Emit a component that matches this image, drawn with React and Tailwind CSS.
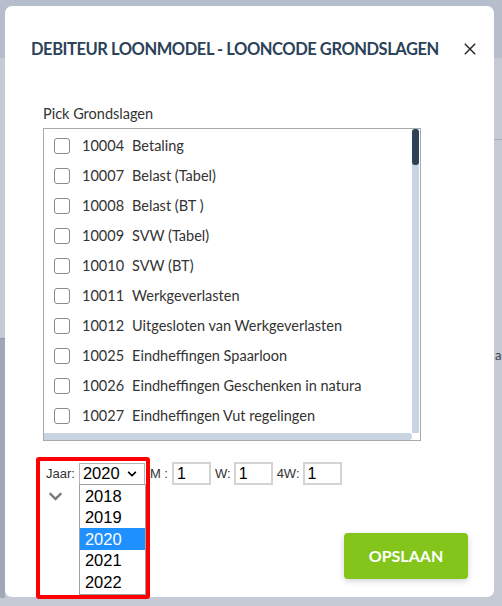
import React from 'react';

const ROWS = [
  ['10004', 'Betaling'],
  ['10007', 'Belast (Tabel)'],
  ['10008', 'Belast (BT )'],
  ['10009', 'SVW (Tabel)'],
  ['10010', 'SVW (BT)'],
  ['10011', 'Werkgeverlasten'],
  ['10012', 'Uitgesloten van Werkgeverlasten'],
  ['10025', 'Eindheffingen Spaarloon'],
  ['10026', 'Eindheffingen Geschenken in natura'],
  ['10027', 'Eindheffingen Vut regelingen'],
];

const YEARS = ['2018', '2019', '2020', '2021', '2022'];

const sans = { fontFamily: 'Lato, "Noto Sans", sans-serif' };

function Chevron({ className }) {
  return (
    <svg viewBox="0 0 448 512" className={className} fill="currentColor">
      <path d="M207 381.5L12.7 187.1c-9.4-9.4-9.4-24.6 0-33.9l22.7-22.7c9.4-9.4 24.5-9.4 33.9 0L224 284.5l154.7-154c9.4-9.3 24.5-9.3 33.9 0l22.7 22.7c9.4 9.4 9.4 24.6 0 33.9L241 381.5c-9.4 9.4-24.6 9.4-34 0z" />
    </svg>
  );
}

function NumInput({ value }) {
  return (
    <div className="w-[39px] h-[23px] border-2 border-[#d4d4d4] bg-white flex items-center pl-[3px] text-[16px] text-black leading-none">
      {value}
    </div>
  );
}

export default function App() {
  return (
    <div className="relative w-[502px] h-[606px] overflow-hidden bg-[#c6cad5]">
      {/* page behind the overlay */}
      <div className="absolute left-0 top-0 w-full h-[58px] bg-[#b6bdcb]" />
      <div className="absolute right-0 top-[139px] w-[10px] h-px bg-[#a8aebb]" />
      <div className="absolute left-0 top-[338px] w-[5px] h-[260px] bg-[#a0a8b8] border-t border-[#8f97a8]" />
      <span className="absolute left-[495px] top-[346px] text-[13px] text-[#3a3f48]" style={sans}>as</span>

      {/* modal */}
      <div
        className="absolute left-[5px] top-[6px] w-[489px] h-[591px] rounded-[7px] bg-white flex flex-col pl-[26px] pr-[18px] pt-[32px] pb-[18px]"
        style={sans}
      >
        <div className="flex items-center justify-between h-[22px]">
          <h2 className="text-[16.5px] font-bold tracking-[-0.45px] text-[#2b4259] leading-none whitespace-nowrap">
            DEBITEUR LOONMODEL - LOONCODE GRONDSLAGEN
          </h2>
          <svg viewBox="0 0 12 12" className="w-[12px] h-[12px] text-[#222]" fill="none" stroke="currentColor" strokeWidth="1.4">
            <path d="M0.8 0.8L11.2 11.2M11.2 0.8L0.8 11.2" />
          </svg>
        </div>

        <div className="mt-[44px] pl-[12px] text-[14.5px] leading-[20px] text-[#333]">Pick Grondslagen</div>

        <div className="mt-[4px] ml-[12px] w-[378px] h-[313px] border border-[#a9a9a9] flex flex-col overflow-hidden">
          <div className="flex flex-1 min-h-0">
            <div className="flex-1 pt-[2px] overflow-hidden">
              {ROWS.map(([code, name]) => (
                <div key={code} className="h-[30px] flex items-center pl-[10px] text-[14.5px] text-[#333] whitespace-nowrap">
                  <span className="w-[16px] h-[16px] rounded-[3px] border border-[#8a8a8a] bg-white shrink-0" />
                  <span className="ml-[12px]">{code}</span>
                  <span className="ml-[8px]">{name}</span>
                </div>
              ))}
            </div>
            <div className="w-[7px] mr-px bg-[#c8d4e1] rounded-t-[3px] flex flex-col">
              <div className="h-[36px] rounded-[3px] bg-[#2c4259]" />
            </div>
          </div>
          <div className="h-[7px] flex">
            <div className="flex-1 bg-[#c8d4e1] rounded-r-[3px]" />
            <div className="w-[8px]" />
          </div>
        </div>

        {/* Jaar / M / W / 4W */}
        <div className="mt-[21px] ml-[15px] flex items-center h-[23px] text-[13px] text-[#333]" style={{ fontFamily: '"Liberation Sans", Arial, sans-serif' }}>
          <span>Jaar:</span>
          <div className="relative ml-[4px]">
            <div className="w-[66px] h-[22px] border border-[#b5b5b5] bg-white flex items-center pl-[3px] pr-[7px] justify-between text-[16.5px] text-black leading-none">
              <span>2020</span>
              <Chevron className="w-[10px] h-[10px] text-black" />
            </div>
            <div className="absolute left-0 top-[21px] w-[67px] h-[111px] border border-[#a0a0a0] bg-white flex flex-col py-[1px] z-10">
              {YEARS.map((y) => (
                <div
                  key={y}
                  className={`h-[21.6px] flex items-center pl-[5px] text-[16.5px] leading-none ${y === '2020' ? 'bg-[#1e90ff] text-white' : 'text-black'}`}
                >
                  {y}
                </div>
              ))}
            </div>
          </div>
          <span className="ml-[5px]">M :</span>
          <div className="ml-[4px]"><NumInput value="1" /></div>
          <span className="ml-[4px]">W:</span>
          <div className="ml-[3px]"><NumInput value="1" /></div>
          <span className="ml-[4px]">4W:</span>
          <div className="ml-[3px]"><NumInput value="1" /></div>
        </div>
        <div className="ml-[17px] mt-[4px]">
          <Chevron className="w-[15px] h-[15px] text-[#7a7a7a]" />
        </div>

        <div className="mt-auto mr-[8px] flex justify-end">
          <button className="w-[124px] h-[46px] rounded-[4px] bg-[#83c51a] text-white text-[16px] font-bold shadow-[0_2px_6px_rgba(0,0,0,0.18)]">
            OPSLAAN
          </button>
        </div>
      </div>

      {/* annotation */}
      <div className="absolute left-[36px] top-[457px] w-[114px] h-[142px] border-[4px] border-[#ff0000] rounded-[3px] pointer-events-none" />
    </div>
  );
}
